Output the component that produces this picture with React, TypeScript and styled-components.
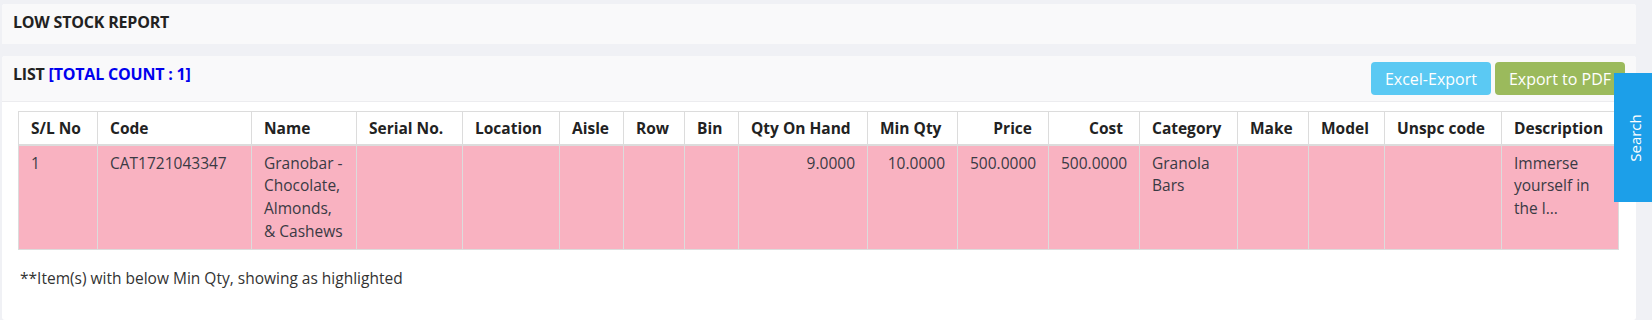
import styled, { createGlobalStyle } from "styled-components";

const GlobalStyle = createGlobalStyle`
  body {
    margin: 0;
    background: #f0f1f5;
    font-family: "Open Sans", "Liberation Sans", sans-serif;
    color: #333;
  }
`;

const Page = styled.div`
  position: relative;
  padding: 4px 16px 0 2px;
  display: flex;
  flex-direction: column;
  gap: 12px;
  height: 316px;
  overflow: hidden;
`;

const Card = styled.section<{ grow?: boolean }>`
  background: #fff;
  border-radius: 3px;
  flex: ${(p) => (p.grow ? "1" : "none")};
`;

const CardHeader = styled.div<{ bottom: number }>`
  display: flex;
  justify-content: space-between;
  align-items: flex-start;
  background: #f9f9fa;
  padding: 6px 11px ${(p) => p.bottom}px 11px;
  border-bottom: ${(p) => (p.bottom < 10 ? "1px solid #ececef" : "none")};
  border-radius: 3px 3px 0 0;
`;

const Title = styled.h4`
  margin: 0;
  font-size: 16px;
  line-height: 24px;
  font-weight: 700;
  color: #222;
  letter-spacing: -0.2px;

  span {
    color: #0000ee;
  }
`;

const Actions = styled.div`
  display: flex;
  gap: 4px;
`;

const Button = styled.button<{ tone: string }>`
  height: 33px;
  padding: 0 14px;
  border: none;
  border-radius: 4px;
  background: ${(p) => p.tone};
  color: #fff;
  font-family: "Open Sans", "Liberation Sans", sans-serif;
  font-size: 16px;
`;

const CardBody = styled.div`
  padding: 9px 16px 0 16px;
`;

const Table = styled.table`
  width: 1600px;
  table-layout: fixed;
  border-collapse: collapse;
  font-size: 15.5px;
  line-height: 22.7px;
`;

const Th = styled.th<{ right?: boolean }>`
  padding: 5px 16px 4px 12px;
  text-align: ${(p) => (p.right ? "right" : "left")};
  font-weight: 700;
  color: #222;
  background: #fff;
  border: 1px solid #dcdcdc;
  border-bottom: 2px solid #dcdcdc;
  white-space: nowrap;
`;

const Td = styled.td<{ right?: boolean }>`
  padding: 6px 12px 6px 12px;
  vertical-align: top;
  text-align: ${(p) => (p.right ? "right" : "left")};
  white-space: ${(p) => (p.right ? "nowrap" : "normal")};
  background: #f9b2c1;
  color: #3a3a44;
  border: 1px solid #dcdcdc;
`;

const Wrap = styled.div`
  max-width: 82px;
`;

const Note = styled.p`
  margin: 17px 0 0 2px;
  font-size: 15.5px;
  line-height: 22.7px;
  color: #333;
`;

const SearchTab = styled.div`
  position: absolute;
  top: 73px;
  right: 0;
  width: 38px;
  height: 129px;
  padding-left: 4px;
  box-sizing: border-box;
  background: #1c9fe9;
  display: flex;
  align-items: center;
  justify-content: center;

  span {
    transform: rotate(-90deg);
    color: #fff;
    font-size: 15px;
    white-space: nowrap;
  }
`;

const columns: { label: string; width: number; right?: boolean }[] = [
  { label: "S/L No", width: 79 },
  { label: "Code", width: 154 },
  { label: "Name", width: 105 },
  { label: "Serial No.", width: 106 },
  { label: "Location", width: 97 },
  { label: "Aisle", width: 64 },
  { label: "Row", width: 61 },
  { label: "Bin", width: 54 },
  { label: "Qty On Hand", width: 129 },
  { label: "Min Qty", width: 90 },
  { label: "Price", width: 91, right: true },
  { label: "Cost", width: 91, right: true },
  { label: "Category", width: 98 },
  { label: "Make", width: 71 },
  { label: "Model", width: 76 },
  { label: "Unspc code", width: 117 },
  { label: "Description", width: 117 },
];

const row = [
  { v: "1" },
  { v: "CAT1721043347" },
  { v: "Granobar - Chocolate, Almonds, & Cashews", wrap: true },
  { v: "" },
  { v: "" },
  { v: "" },
  { v: "" },
  { v: "" },
  { v: "9.0000", right: true },
  { v: "10.0000", right: true },
  { v: "500.0000", right: true },
  { v: "500.0000", right: true },
  { v: "Granola Bars", wrap: true },
  { v: "" },
  { v: "" },
  { v: "" },
  { v: "Immerse yourself in the l...", wrap: true },
];

export default function App() {
  return (
    <>
      <GlobalStyle />
      <Page>
        <Card>
          <CardHeader bottom={10}>
            <Title>LOW STOCK REPORT</Title>
          </CardHeader>
        </Card>
        <Card grow>
          <CardHeader bottom={6}>
            <Title>
              LIST <span>[TOTAL COUNT : 1]</span>
            </Title>
            <Actions>
              <Button tone="#5bc9f3">Excel-Export</Button>
              <Button tone="#9bba5c">Export to PDF</Button>
            </Actions>
          </CardHeader>
          <CardBody>
            <Table>
              <colgroup>
                {columns.map((c) => (
                  <col key={c.label} style={{ width: c.width }} />
                ))}
              </colgroup>
              <thead>
                <tr>
                  {columns.map((c) => (
                    <Th key={c.label} right={c.right}>
                      {c.label}
                    </Th>
                  ))}
                </tr>
              </thead>
              <tbody>
                <tr>
                  {row.map((c, i) => (
                    <Td key={i} right={c.right}>
                      {c.wrap ? <Wrap>{c.v}</Wrap> : c.v}
                    </Td>
                  ))}
                </tr>
              </tbody>
            </Table>
            <Note>**Item(s) with below Min Qty, showing as highlighted</Note>
          </CardBody>
        </Card>
        <SearchTab>
          <span>Search</span>
        </SearchTab>
      </Page>
    </>
  );
}
